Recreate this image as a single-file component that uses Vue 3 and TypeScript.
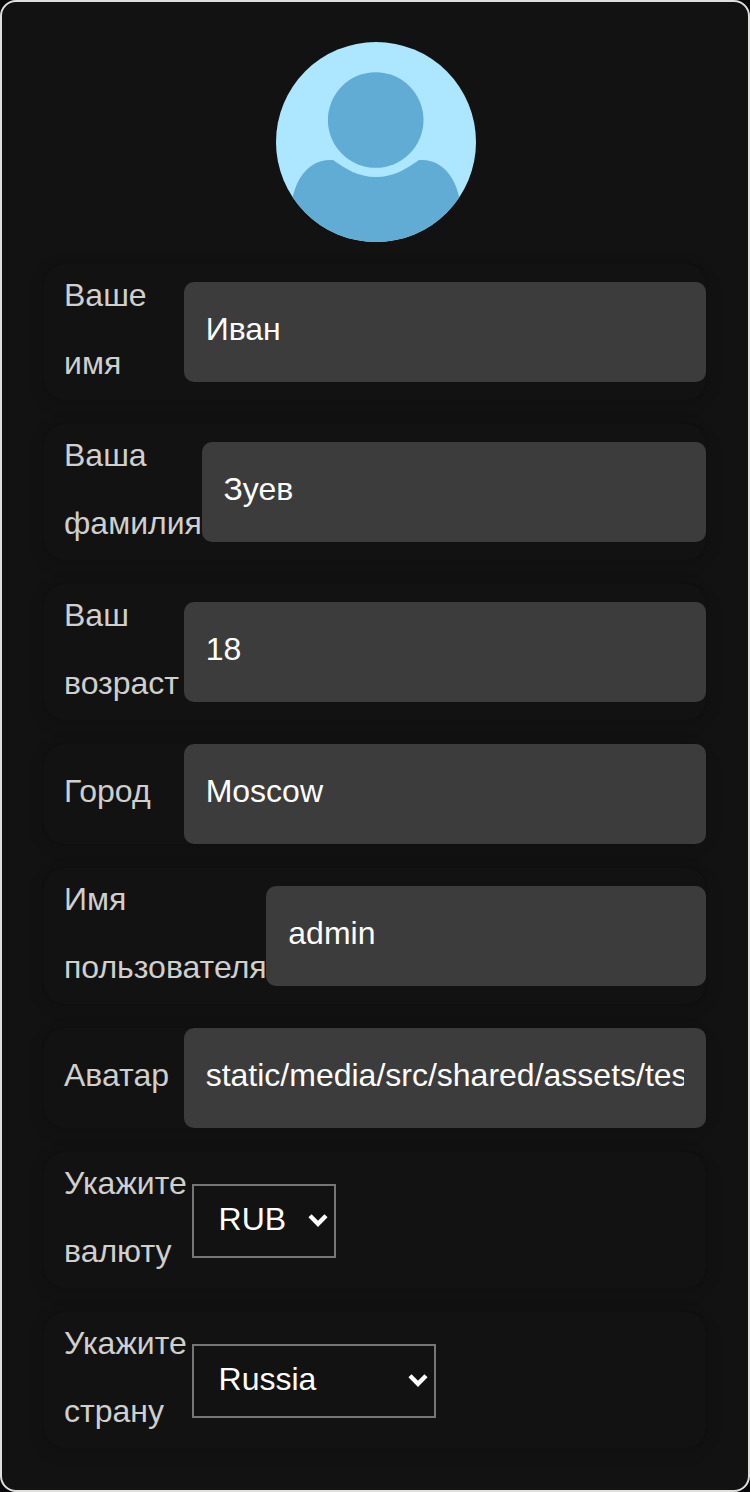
<script setup lang="ts">
import { ref } from 'vue'

interface Field {
  id: string
  label: string
  value: string
  options?: string[]
}

const fields = ref<Field[]>([
  { id: 'first', label: 'Ваше имя', value: 'Иван' },
  { id: 'last', label: 'Ваша фамилия', value: 'Зуев' },
  { id: 'age', label: 'Ваш возраст', value: '18' },
  { id: 'city', label: 'Город', value: 'Moscow' },
  { id: 'user', label: 'Имя пользователя', value: 'admin' },
  { id: 'avatar', label: 'Аватар', value: 'static/media/src/shared/assets/tests/storybook.jpg' },
  { id: 'currency', label: 'Укажите валюту', value: 'RUB', options: ['RUB', 'EUR', 'USD'] },
  { id: 'country', label: 'Укажите страну', value: 'Russia', options: ['Russia', 'Belarus', 'Ukraine', 'Kazakhstan', 'Armenia'] },
])
</script>

<template>
  <main class="profile">
    <svg class="avatar" viewBox="0 0 200 200" aria-hidden="true">
      <defs>
        <clipPath id="round"><circle cx="100" cy="100" r="100" /></clipPath>
      </defs>
      <g clip-path="url(#round)">
        <rect width="200" height="200" fill="#ade7ff" />
        <circle cx="99.7" cy="78" r="47.8" fill="#60acd4" />
        <path d="M15 172C15 143 30 116 57 118C70 127 82 135 100 135C118 135 130 127 143 118C170 116 185 143 185 172V200H15Z" fill="#60acd4" />
      </g>
    </svg>
    <form class="fields" @submit.prevent>
      <div v-for="field in fields" :key="field.id" class="row">
        <label class="label" :for="field.id">{{ field.label }}</label>
        <div v-if="field.options" class="picker" :class="field.id">
          <select :id="field.id" v-model="field.value" class="select">
            <option v-for="option in field.options" :key="option">{{ option }}</option>
          </select>
          <svg class="chevron" viewBox="0 0 20 14" aria-hidden="true">
            <path d="M2 2.8L10 10.8L18 2.8" />
          </svg>
        </div>
        <input v-else :id="field.id" v-model="field.value" class="input" type="text" spellcheck="false" />
      </div>
    </form>
  </main>
</template>

<style>
body {
  background: #08080b;
}
</style>

<style scoped>
.profile {
  box-sizing: border-box;
  height: 1492px;
  padding: 40px 42px;
  border: 2px solid #dfdfdd;
  border-radius: 16px;
  background: #121212;
  color: #fff;
  font: 32px/68px "Liberation Sans", Arial, sans-serif;
  display: flex;
  flex-direction: column;
  align-items: center;
  gap: 22px;
}
.avatar {
  width: 200px;
  height: 200px;
  flex: none;
  margin-left: 2px;
}
.fields {
  width: 100%;
  display: flex;
  flex-direction: column;
  gap: 24px;
}
.row {
  display: flex;
  align-items: center;
  box-sizing: border-box;
  padding-left: 20px;
  border-radius: 20px;
  background: #121212;
  box-shadow: 0 4px 20px rgba(0, 0, 0, 0.08), 0 0 3px rgba(0, 0, 0, 0.28);
}
.label {
  position: relative;
  top: -3px;
  flex: none;
  width: min-content;
  min-width: 120px;
  color: #cfcfcd;
}
.input {
  box-sizing: border-box;
  flex: 1;
  min-width: 0;
  height: 100px;
  margin-left: -0.25px;
  padding: 0 22px 6px 21.9px;
  border: 0;
  border-radius: 10px;
  outline: 0;
  background: #3c3c3c;
  color: #fff;
  font: inherit;
}
.picker {
  position: relative;
  margin-left: 5.4px;
  margin-top: 2px;
  height: 74px;
}
.currency {
  width: 144px;
}
.country {
  width: 244px;
}
.select {
  appearance: none;
  display: block;
  box-sizing: border-box;
  width: 100%;
  height: 100%;
  margin: 0;
  padding: 0 0 4px 24.4px;
  border: 2px solid #767676;
  border-radius: 0;
  background: transparent;
  color: #fff;
  font: inherit;
  line-height: 36px;
}
.chevron {
  position: absolute;
  right: 8px;
  top: 29px;
  width: 20px;
  height: 14px;
  fill: none;
  stroke: #fff;
  stroke-width: 4.4;
  pointer-events: none;
}
</style>
